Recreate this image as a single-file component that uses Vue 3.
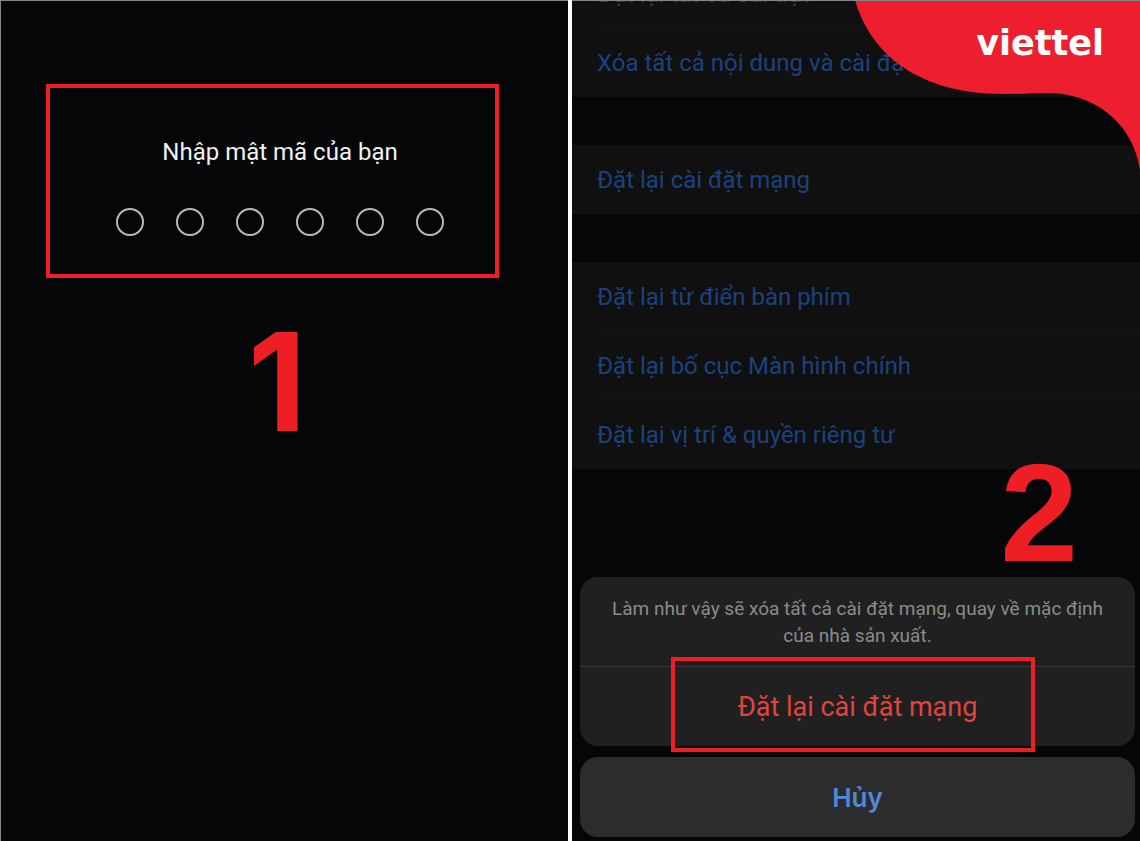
<script setup>
const dots = 6
const groups = [
  ['Đặt lại tất cả cài đặt', 'Xóa tất cả nội dung và cài đặt'],
  ['Đặt lại cài đặt mạng'],
  ['Đặt lại từ điển bàn phím', 'Đặt lại bố cục Màn hình chính', 'Đặt lại vị trí & quyền riêng tư'],
]
</script>

<template>
  <main class="guide">
    <section class="panel passcode">
      <div class="frame">
        <h1 class="prompt">Nhập mật mã của bạn</h1>
        <div class="dots" role="img" aria-label="Mật mã">
          <span v-for="n in dots" :key="n" class="dot"></span>
        </div>
      </div>
      <div class="step step-one">1</div>
    </section>

    <section class="panel reset">
      <div class="groups">
        <div v-for="(group, i) in groups" :key="i" class="group">
          <button v-for="label in group" :key="label" type="button" class="row">
            <span class="row-label">{{ label }}</span>
          </button>
        </div>
      </div>

      <div class="brand">
        <svg class="wave" viewBox="0 0 285 170" aria-hidden="true">
          <path d="M0 0C12 42 50 94 150 94C170 94 178 93 193 93C238 93 278 122 285 170V0Z" fill="#ed1f2e" />
        </svg>
        <span class="wordmark">viettel</span>
      </div>

      <div class="actions">
        <div class="step step-two">2</div>
        <div class="sheet">
          <p class="message">Làm như vậy sẽ xóa tất cả cài đặt mạng, quay về mặc định của nhà sản xuất.</p>
          <div class="confirm">
            <button type="button" class="danger">Đặt lại cài đặt mạng</button>
            <span class="marker"></span>
          </div>
        </div>
        <button type="button" class="cancel">Hủy</button>
      </div>
    </section>
  </main>
</template>

<style>
body {
  background: #040607;
}
</style>

<style scoped>
.guide {
  box-sizing: border-box;
  display: grid;
  grid-template-columns: 1fr 1fr;
  column-gap: 4px;
  min-height: 100vh;
  background: #fff;
  font-family: Roboto, "Liberation Sans", sans-serif;
}

.panel {
  position: relative;
  display: flex;
  flex-direction: column;
  overflow: hidden;
  background: #040607;
}

.panel::after {
  content: "";
  position: absolute;
  inset: 0;
  border-top: 1px solid #858787;
  pointer-events: none;
}

.passcode::after {
  border-left: 1px solid #858787;
}

button {
  margin: 0;
  border: 0;
  font-family: inherit;
  cursor: pointer;
}

.frame {
  box-sizing: border-box;
  margin: 84px 69px 0 46px;
  padding: 48px 51px 38px 66px;
  border: 4px solid #ed1f24;
}

.prompt {
  margin: 0;
  color: #f2f2f2;
  font-size: 24px;
  font-weight: 400;
  line-height: 32px;
  text-align: center;
  white-space: nowrap;
}

.dots {
  display: flex;
  justify-content: space-between;
  margin-top: 40px;
}

.dot {
  box-sizing: border-box;
  width: 28px;
  height: 28px;
  border: 2px solid #b9baba;
  border-radius: 50%;
}

.step {
  color: #ed1f24;
  font-weight: 700;
  line-height: 1;
}

.step-one {
  margin-top: 36px;
  padding-right: 14px;
  font-family: Inter, sans-serif;
  font-size: 136px;
  text-align: center;
}

.groups {
  display: flex;
  flex-direction: column;
  gap: 48px;
  margin-top: -41px;
}

.group {
  background: #101010;
}

.row {
  display: block;
  width: 100%;
  padding: 0 0 0 25px;
  background: none;
  color: #1c427e;
  font-size: 24px;
  text-align: left;
}

.row-label {
  display: block;
  box-sizing: border-box;
  height: 69px;
  border-bottom: 1px solid #161616;
  line-height: 70px;
  white-space: nowrap;
}

.row:last-child .row-label {
  border-bottom-color: transparent;
}

.brand {
  position: absolute;
  top: 0;
  right: 0;
  width: 285px;
}

.wave {
  display: block;
  width: 100%;
}

.wordmark {
  position: absolute;
  top: 23px;
  right: 36px;
  color: #fff;
  font-family: "DejaVu Sans", sans-serif;
  font-size: 35px;
  font-weight: 700;
  line-height: 40px;
}

.actions {
  position: relative;
  display: flex;
  flex-direction: column;
  gap: 11px;
  margin-top: auto;
  padding: 0 5px 4px 8px;
}

.step-two {
  position: absolute;
  right: 62px;
  bottom: 100%;
  font-family: "Liberation Sans", sans-serif;
  font-size: 140px;
  line-height: 128px;
}

.sheet {
  border-radius: 18px;
  background: #202020;
}

.message {
  margin: 0;
  padding: 18px 24px 17px;
  border-bottom: 1px solid #3a3a3a;
  color: #8b8b8b;
  font-size: 19px;
  line-height: 27px;
  text-align: center;
}

.confirm {
  position: relative;
}

.danger {
  display: block;
  width: 100%;
  height: 79px;
  background: none;
  color: #e0443e;
  font-size: 27px;
}

.marker {
  position: absolute;
  inset: -10px 100px -6px 91px;
  border: 4px solid #ed1f24;
  pointer-events: none;
}

.cancel {
  height: 80px;
  border-radius: 18px;
  background: #2c2c2e;
  color: #508ad6;
  font-family: Inter, sans-serif;
  font-size: 26px;
  font-weight: 600;
}
</style>
